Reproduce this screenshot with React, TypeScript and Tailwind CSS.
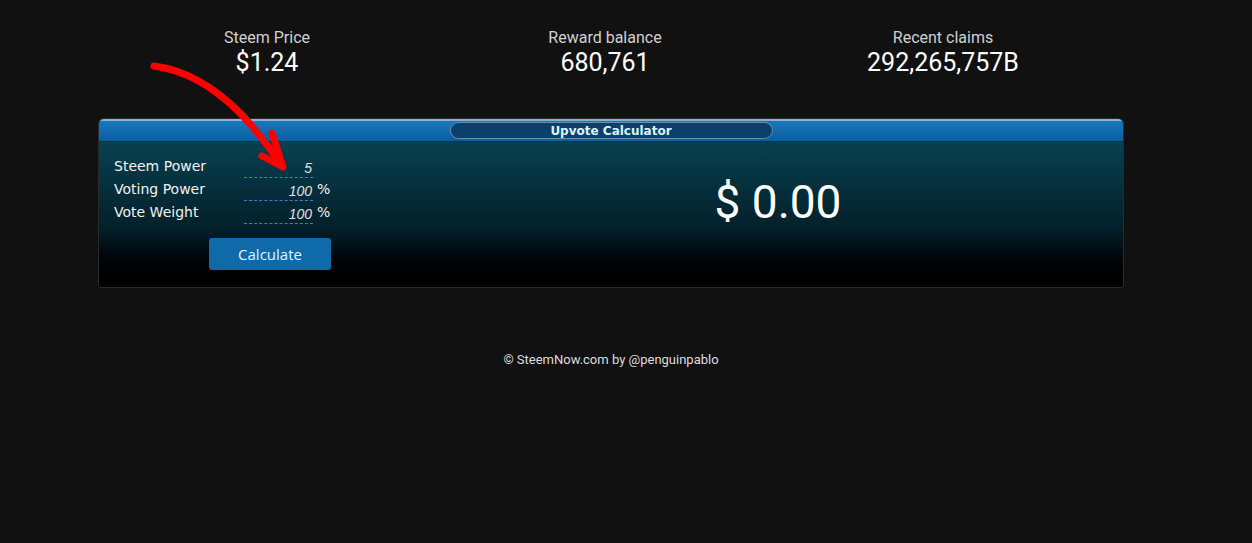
export default function App() {
  const stats = [
    { label: "Steem Price", value: "$1.24" },
    { label: "Reward balance", value: "680,761" },
    { label: "Recent claims", value: "292,265,757B" },
  ];
  const fields = [
    { label: "Steem Power", value: "5", unit: "" },
    { label: "Voting Power", value: "100", unit: "%" },
    { label: "Vote Weight", value: "100", unit: "%" },
  ];

  return (
    <div className="relative min-h-[543px] w-[1252px] bg-[#111111] font-['Roboto',sans-serif] overflow-hidden">
      {/* stats */}
      <div className="ml-[98px] grid w-[1014px] grid-cols-3 pt-[28px]">
        {stats.map((s) => (
          <div key={s.label} className="flex flex-col items-center">
            <div className="text-[16px] leading-[20px] text-[#d0d0d0]">{s.label}</div>
            <div className="text-[25px] leading-[30px] text-white">{s.value}</div>
          </div>
        ))}
      </div>

      {/* calculator panel */}
      <div className="ml-[98px] mt-[40px] h-[170px] w-[1026px] overflow-hidden rounded-t-[6px] rounded-b-[3px] border border-[#2a2a2a] bg-gradient-to-b from-[#0b4a5c] via-[#03202a] via-65% to-[#000000]">
        <div className="flex h-[22px] justify-center border-t-2 border-[#7fb4d8] bg-gradient-to-b from-[#1a78bd] to-[#0a5e9e] shadow-[0_1px_0_#0a3550]">
          <div className="mt-[1px] flex h-[17px] w-[323px] items-center justify-center rounded-full border border-[#6a8fae] bg-[#0b3f6c] font-['DejaVu_Sans',sans-serif] text-[12px] font-bold text-[#d8f6ff]">
            Upvote Calculator
          </div>
        </div>
        <div className="flex">
          <div className="pl-[15px] pt-[14px]">
            {fields.map((f) => (
              <div key={f.label} className="flex h-[23px] items-center font-['DejaVu_Sans',sans-serif] text-[14px] text-[#f2f2f2]">
                <span className="w-[130px]">{f.label}</span>
                <span className="w-[69px] border-b border-dashed border-[#3d7fc0] pr-[1px] pt-[3px] text-right font-['Liberation_Sans',sans-serif] italic leading-[18px] text-[#e0e0e0]">
                  {f.value}
                </span>
                <span className="ml-[4px] text-[14px]">{f.unit}</span>
              </div>
            ))}
            <button className="ml-[95px] mt-[14px] h-[32px] w-[122px] rounded-[3px] bg-[#0e6aa8] font-['Open_Sans',sans-serif] text-[15px] text-[#e3f6ff]">
              Calculate
            </button>
          </div>
          <div className="flex flex-1 justify-center pl-[102px] pt-[34px]">
            <span className="text-[46px] leading-[54px] text-white">$ 0.00</span>
          </div>
        </div>
      </div>

      {/* footer */}
      <div className="ml-[98px] mt-[62px] w-[1026px] text-center text-[13px] text-[#dddddd]">
        © SteemNow.com by @penguinpablo
      </div>

      {/* red annotation arrow */}
      <svg className="pointer-events-none absolute left-0 top-0" width="1252" height="543">
        <path
          d="M154 66 C 185 70, 215 88, 240 113 C 258 132, 270 148, 281 165"
          fill="none"
          stroke="#ff0000"
          strokeWidth="7"
          strokeLinecap="round"
        />
        <path
          d="M262 156 L 283 167 L 272 133"
          fill="none"
          stroke="#ff0000"
          strokeWidth="7"
          strokeLinecap="round"
          strokeLinejoin="round"
        />
      </svg>
    </div>
  );
}
